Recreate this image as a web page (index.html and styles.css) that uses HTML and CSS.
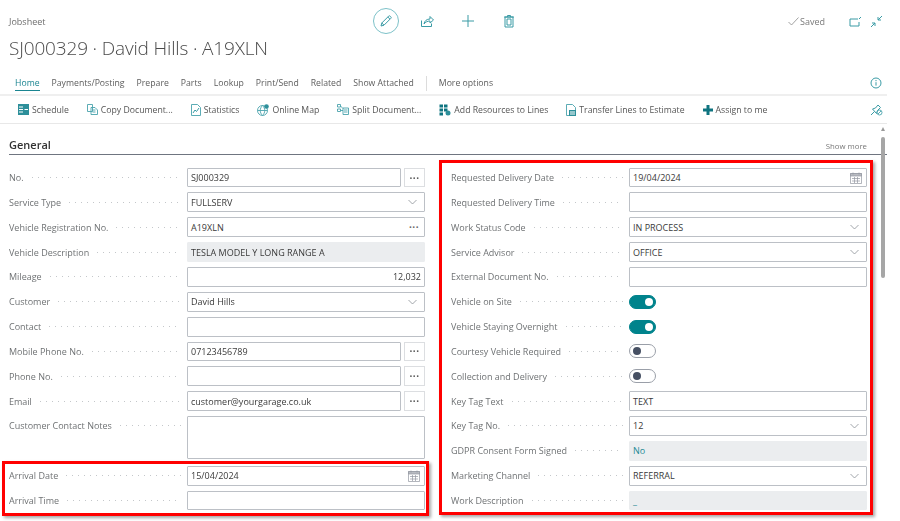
FILE: index.html
```html
<!DOCTYPE html>
<html lang="en">
<head>
<meta charset="utf-8">
<title>Jobsheet</title>
<link rel="stylesheet" href="styles.css">
</head>
<body>
<div class="page">
  <div class="content">
    <header class="topbar">
      <div class="caption">Jobsheet</div>
      <div class="tools">
        <span class="edit"><svg width="14" height="14" viewBox="0 0 14 14"><path d="M2 12l.8-3L9.6 2.200a1.100 1.100 0 0 1 1.600 0l.6.6a1.100 1.100 0 0 1 0 1.600L5 11.200z M2.800 9L5 11.200 M8.800 3l2.200 2.200" class="ln"/></svg></span>
        <svg class="tool" width="14" height="14" viewBox="0 0 14 14"><path d="M1.500 6.500v6h10v-3 M4 10c.5-3 2.500-5 6-5V2.500l3.500 3.500L10 9V7c-2.500 0-4.500 1-6 3z" class="ln"/></svg>
        <svg class="tool" width="14" height="14" viewBox="0 0 14 14"><path d="M7 1v12M1 7h12" class="ln"/></svg>
        <svg class="tool" width="14" height="14" viewBox="0 0 14 14"><path d="M3 3h8v10H3z M2 3h10 M5.500 3V1.500h3V3 M5 5h4v6H5z" class="ln"/></svg>
      </div>
      <div class="status">
        <svg width="11" height="9" viewBox="0 0 11 9"><path d="M.5 5l3 3L10.500.5" class="check"/></svg>
        <span class="saved">Saved</span>
        <svg class="popout" width="13" height="11" viewBox="0 0 13 11"><path d="M9 3H1v7h9V6" class="ln"/><path d="M10 3l2-2" class="ln"/></svg>
        <svg width="13" height="13" viewBox="0 0 13 13"><path d="M12 1L8 5M8 2v3h3M1 12l4-4M2 8h3v3" class="ln"/></svg>
      </div>
    </header>
    <h1 class="title">SJ000329 · David Hills · A19XLN</h1>
    <nav class="nav">
      <a class="tab active">Home</a>
      <a class="tab">Payments/Posting</a>
      <a class="tab">Prepare</a>
      <a class="tab">Parts</a>
      <a class="tab">Lookup</a>
      <a class="tab">Print/Send</a>
      <a class="tab">Related</a>
      <a class="tab">Show Attached</a>
      <span class="sep"></span>
      <a class="tab">More options</a>
      <svg class="info" width="12" height="12" viewBox="0 0 12 12"><circle cx="6" cy="6" r="5" class="ln"/><path d="M6 5.200v3.400M6 3v1.200" class="ln"/></svg>
    </nav>
    <div class="actions">
      <a class="act first"><svg width="11" height="11" viewBox="0 0 11 11"><rect width="11" height="11" y="0" class="fill"/><path d="M1 3h4M1 5.500h4M1 8h4M6.500 5.500h3.500" class="wl"/></svg>Schedule</a>
      <a class="act"><svg width="11" height="11" viewBox="0 0 11 11"><path d="M.5 .5h5v7h-5z M4 3.500h4l2.500 2.500v4.500H4z" class="ln1"/><path d="M5.500 6h3M5.500 8h3" class="ln1"/></svg>Copy Document...</a>
      <a class="act"><svg width="10" height="12" viewBox="0 0 10 12"><path d="M.5 .5h6l3 3v8h-9z" class="ln1"/><path d="M2 9l2-3 1.500 1.500L8 4" class="ln"/></svg>Statistics</a>
      <a class="act"><svg width="12" height="12" viewBox="0 0 12 12"><circle cx="5.500" cy="6.500" r="5" class="ln1"/><path d="M.5 6.500h10M5.500 1.500c-3 3-3 7 0 10M5.500 1.500c3 3 3 7 0 10" class="ln1"/><circle cx="9.500" cy="2.500" r="2.300" class="fill"/></svg>Online Map</a>
      <a class="act"><svg width="12" height="11" viewBox="0 0 12 11"><path d="M.5 .5h3v2.500h-3z M.5 5h3v2.500h-3z M6 4h5.500v6.500H6z" class="ln1"/><path d="M3.500 2l2.500 2.500M3.500 6.500H6M7 6h3.500M7 8h3.500" class="ln1"/></svg>Split Document...</a>
      <a class="act"><svg width="12" height="12" viewBox="0 0 12 12"><path d="M.5 .5h3.500v3H.5z M5 .5h3.500v3H5z M.5 4.500h3.500v3H.5z M5 4.500h3.500v3H5z M.5 8.500h3.500v3H.5z" class="fill dark"/><circle cx="9" cy="9" r="2.500" class="fill"/></svg>Add Resources to Lines</a>
      <a class="act"><svg width="10" height="12" viewBox="0 0 10 12"><path d="M.5 .5h6l3 3v8h-9z" class="ln1"/><rect x="3" y="6" width="7" height="6" class="fill"/><path d="M4 8h5M4 10h5" class="wl"/></svg>Transfer Lines to Estimate</a>
      <a class="act"><svg width="10" height="10" viewBox="0 0 10 10"><path d="M3.500 0h3v3.500H10v3H6.500V10h-3V6.500H0v-3h3.500z" class="fill dark"/></svg>Assign to me</a>
      <svg class="unpin" width="13" height="13" viewBox="0 0 13 13"><path d="M1 12l3.500-3.500 M2.500 6l4 4.500 1-3 3-3L8 2 5.500 5z" class="ln"/><circle cx="9.500" cy="9.500" r="2.500" class="ln1"/><path d="M8 11l3-3" class="ln1"/></svg>
    </div>
    <div class="section-head">
      <h2 class="section-title">General</h2>
      <a class="show-more">Show more</a>
    </div>
    <div class="columns">
      <div class="col">
        <div class="row"><span class="label">No.</span><span class="dots"></span><div class="field">SJ000329</div><button class="more">···</button></div>
        <div class="row"><span class="label">Service Type</span><span class="dots"></span><div class="field">FULLSERV<svg class="chev" width="11" height="6" viewBox="0 0 11 6"><path d="M1.500 1l4 4 4-4"/></svg></div></div>
        <div class="row"><span class="label">Vehicle Registration No.</span><span class="dots"></span><div class="field">A19XLN<span class="inner-more">···</span></div></div>
        <div class="row"><span class="label">Vehicle Description</span><span class="dots"></span><div class="field off">TESLA MODEL Y LONG RANGE A</div></div>
        <div class="row"><span class="label">Mileage</span><span class="dots"></span><div class="field num">12,032</div></div>
        <div class="row"><span class="label">Customer</span><span class="dots"></span><div class="field">David Hills<svg class="chev" width="11" height="6" viewBox="0 0 11 6"><path d="M1.500 1l4 4 4-4"/></svg></div></div>
        <div class="row"><span class="label">Contact</span><span class="dots"></span><div class="field"></div></div>
        <div class="row"><span class="label">Mobile Phone No.</span><span class="dots"></span><div class="field">07123456789</div><button class="more">···</button></div>
        <div class="row"><span class="label">Phone No.</span><span class="dots"></span><div class="field"></div><button class="more">···</button></div>
        <div class="row"><span class="label">Email</span><span class="dots"></span><div class="field">customer@yourgarage.co.uk</div><button class="more">···</button></div>
        <div class="row tall"><span class="label">Customer Contact Notes</span><span class="dots"></span><div class="field area"></div></div>
        <div class="row"><span class="label">Arrival Date</span><span class="dots"></span><div class="field">15/04/2024<svg class="cal" width="12" height="12" viewBox="0 0 12 12"><path d="M.5 1.500h11v10H.5z" class="calb"/><path d="M.5 1.500h11v2.500H.5z" class="calf"/><path d="M3 .5v2M9 .5v2M2 6.500h8M2 9h8M4.500 5v6M7.500 5v6" class="calb"/></svg></div></div>
        <div class="row"><span class="label">Arrival Time</span><span class="dots"></span><div class="field"></div></div>
      </div>
      <div class="col">
        <div class="row"><span class="label">Requested Delivery Date</span><span class="dots"></span><div class="field">19/04/2024<svg class="cal" width="12" height="12" viewBox="0 0 12 12"><path d="M.5 1.500h11v10H.5z" class="calb"/><path d="M.5 1.500h11v2.500H.5z" class="calf"/><path d="M3 .5v2M9 .5v2M2 6.500h8M2 9h8M4.500 5v6M7.500 5v6" class="calb"/></svg></div></div>
        <div class="row"><span class="label">Requested Delivery Time</span><span class="dots"></span><div class="field"></div></div>
        <div class="row"><span class="label">Work Status Code</span><span class="dots"></span><div class="field">IN PROCESS<svg class="chev" width="11" height="6" viewBox="0 0 11 6"><path d="M1.500 1l4 4 4-4"/></svg></div></div>
        <div class="row"><span class="label">Service Advisor</span><span class="dots"></span><div class="field">OFFICE<svg class="chev" width="11" height="6" viewBox="0 0 11 6"><path d="M1.500 1l4 4 4-4"/></svg></div></div>
        <div class="row"><span class="label">External Document No.</span><span class="dots"></span><div class="field"></div></div>
        <div class="row"><span class="label">Vehicle on Site</span><span class="dots"></span><div class="slot"><span class="toggle on"></span></div></div>
        <div class="row"><span class="label">Vehicle Staying Overnight</span><span class="dots"></span><div class="slot"><span class="toggle on"></span></div></div>
        <div class="row"><span class="label">Courtesy Vehicle Required</span><span class="dots"></span><div class="slot"><span class="toggle"></span></div></div>
        <div class="row"><span class="label">Collection and Delivery</span><span class="dots"></span><div class="slot"><span class="toggle"></span></div></div>
        <div class="row"><span class="label">Key Tag Text</span><span class="dots"></span><div class="field">TEXT</div></div>
        <div class="row"><span class="label">Key Tag No.</span><span class="dots"></span><div class="field">12<svg class="chev" width="11" height="6" viewBox="0 0 11 6"><path d="M1.500 1l4 4 4-4"/></svg></div></div>
        <div class="row"><span class="label">GDPR Consent Form Signed</span><span class="dots"></span><div class="field off link">No</div></div>
        <div class="row"><span class="label">Marketing Channel</span><span class="dots"></span><div class="field">REFERRAL<svg class="chev" width="11" height="6" viewBox="0 0 11 6"><path d="M1.500 1l4 4 4-4"/></svg></div></div>
        <div class="row"><span class="label">Work Description</span><span class="dots"></span><div class="field off link">_</div></div>
      </div>
    </div>
    <div class="scroll-arrow"></div>
    <div class="scroll-thumb"></div>
  </div>
  <div class="mark mark-left"></div>
  <div class="mark mark-right"></div>
</div>
</body>
</html>
```
FILE: styles.css
```css
* { box-sizing: border-box; }
html, body { margin: 0; padding: 0; background: #fff; }
.page { position: relative; width: 900px; height: 521px; overflow: hidden; font-family: "Open Sans", "Noto Sans", sans-serif; font-size: 9px; color: #3a3a3a; }
.content { width: 887px; padding-top: 8px; filter: blur(.3px); }
.ln { fill: none; stroke: #3a9ba5; stroke-width: 1; }
.ln1 { fill: none; stroke: #4aa3ad; stroke-width: .9; }
.fill { fill: #2d8f9a; }
.dark { fill: #0f7480; }
.wl { fill: none; stroke: #fff; stroke-width: 1; }
.wf { fill: #fff; }

.topbar { display: flex; align-items: center; height: 26px; padding-left: 9px; padding-right: 4px; }
.caption { width: 364px; font-size: 9px; color: #6e6e6e; }
.tools { display: flex; align-items: center; }
.edit { width: 26px; height: 26px; border: 1px solid #7cc1c8; border-radius: 50%; display: flex; align-items: center; justify-content: center; margin-right: 21px; }
.tool { margin-right: 27px; }
.status { margin-left: auto; display: flex; align-items: center; }
.check { fill: none; stroke: #8a8a8a; stroke-width: .8; }
.saved { margin-left: 1px; margin-right: 24px; color: #7a7a7a; font-size: 9px; }
.popout { margin-right: 8px; }

.title { margin: 0; height: 28px; padding-left: 9px; font-weight: 300; font-size: 19px; letter-spacing: -.16px; line-height: 28px; color: #4a4a4a; }

.nav { display: flex; align-items: center; gap: 12px; height: 22px; margin-top: 12px; padding: 0 0 2px 15px; border-bottom: 2px solid #efefef; color: #5c5c5c; font-size: 8.7px; }
.tab { line-height: 14px; }
.active { color: #1b8591; border-bottom: 1px solid #1b8591; }
.sep { width: 1px; height: 15px; background: #dcdcdc; }
.info { margin-left: auto; margin-right: 5px; }

.actions { display: flex; align-items: center; height: 28px; padding-left: 18px; border-bottom: 1px solid #e8e8e8; color: #555; font-size: 8.7px; }
.act { display: flex; align-items: center; gap: 3px; margin-right: 18px; white-space: nowrap; }
.unpin { margin-left: auto; margin-right: 4px; }

.section-head { display: flex; align-items: baseline; justify-content: space-between; height: 31px; margin-left: 9px; padding: 14px 20px 0 0; border-bottom: 1px solid #6f7580; }
.section-title { margin: 0; font-size: 11px; font-weight: 600; color: #333; line-height: 14px; }
.show-more { font-size: 7.8px; color: #777; }

.columns { display: grid; grid-template-columns: 416px 416px; column-gap: 26px; margin: 12.6px 0 0 9px; }
.col { display: flex; flex-direction: column; gap: 5px; }
.row { display: flex; align-items: center; height: 19.85px; }
.row.tall { height: 44.7px; align-items: flex-start; }
.tall .label { line-height: 19px; }
.tall .dots { margin-top: 9px; }
.label { flex: none; color: #6f7274; white-space: nowrap; margin-right: 8px; }
.dots { flex: 1 1 0; min-width: 0; height: 1px; margin-right: 6px; background: radial-gradient(circle at .5px .5px, #c4c7ca .6px, transparent .7px) 0 0 / 6px 1px repeat-x; }
.field { position: relative; flex: none; width: 238px; height: 100%; padding: 0 3px 0 3px; display: flex; align-items: center; border: 1px solid #bcc0c6; border-radius: 1px; background: #fff; color: #3a3a3a; }
.row:has(.more) .field { width: 214px; }
.field.off { border-color: #ebedef; background: #ebedef; }
.field.link { color: #1d8a95; }
.field.num { justify-content: flex-end; }
.field.area { height: 43px; }
.more { flex: none; width: 21px; height: 100%; margin: 0 0 0 3px; padding: 0; border: 1px solid #dcdee1; background: #fff; color: #555; font: 700 10px "Open Sans", sans-serif; letter-spacing: .5px; }
.inner-more { margin-left: auto; margin-right: 2px; color: #666; font-weight: 700; font-size: 10px; letter-spacing: .5px; }
.chev { margin-left: auto; margin-right: 3px; fill: none; stroke: #8a8f96; stroke-width: .8; }
.cal { margin-left: auto; margin-right: 1px; }
.calb { fill: none; stroke: #9296a0; stroke-width: .7; }
.calf { fill: #b9bcc2; stroke: #9296a0; stroke-width: .7; }
.slot { flex: none; width: 238px; display: flex; align-items: center; }
.toggle { position: relative; width: 27px; height: 14px; border: 1px solid #9a9fa8; border-radius: 7px; background: #fff; }
.toggle::after { content: ""; position: absolute; top: 2px; left: 2.500px; width: 8px; height: 8px; border-radius: 50%; background: #465063; }
.toggle.on { border-color: #00838c; background: #00838c; }
.toggle.on::after { left: auto; right: 2.500px; background: #fff; }

.scroll-arrow { position: absolute; left: 881px; top: 127px; width: 0; height: 0; border-left: 2.500px solid transparent; border-right: 2.500px solid transparent; border-bottom: 4px solid #9a9a9a; }
.scroll-thumb { position: absolute; left: 881px; top: 137px; width: 4px; height: 141px; border-radius: 2px; background: #a6a6a6; }

.mark { position: absolute; border: 3px solid #f00; box-shadow: 2px 2px 3px rgba(0,0,0,.35); }
.mark-left { left: 2px; top: 461px; width: 427px; height: 55px; }
.mark-right { left: 439px; top: 160px; width: 434px; height: 355px; }
```
